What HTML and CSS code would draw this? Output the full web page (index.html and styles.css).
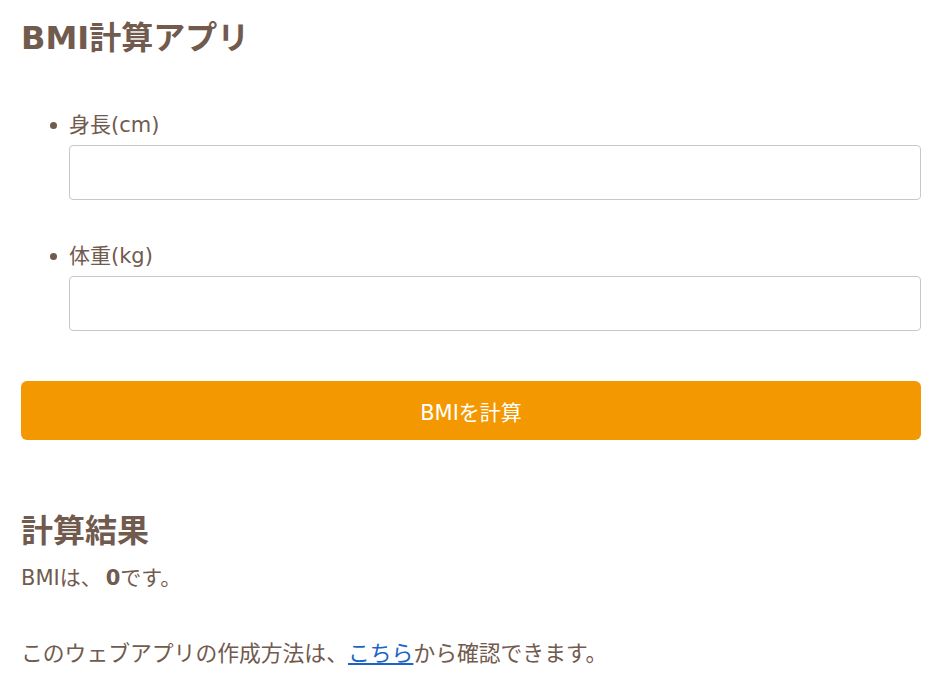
FILE: index.html
```html
<!DOCTYPE html>
<html lang="ja">
<head>
<meta charset="utf-8">
<title>BMI計算アプリ</title>
<link rel="stylesheet" href="styles.css">
</head>
<body>
<main class="app">
  <h1 class="title">BMI計算アプリ</h1>
  <ul class="fields">
    <li class="field">
      <label class="label">身長(cm)</label>
      <input class="input" type="text">
    </li>
    <li class="field">
      <label class="label">体重(kg)</label>
      <input class="input" type="text">
    </li>
  </ul>
  <button class="btn">BMIを計算</button>
  <h2 class="subtitle">計算結果</h2>
  <p class="result">BMIは、<strong class="value">0</strong>です。</p>
  <p class="note">このウェブアプリの作成方法は、<a href="#" class="link">こちら</a>から確認できます。</p>
</main>
</body>
</html>
```

FILE: styles.css
```css
* { box-sizing: border-box; }
html, body { margin: 0; padding: 0; background: #fff; }
body {
  font-family: "DejaVu Sans", "Noto Sans CJK JP", sans-serif;
  color: #715a4e;
}
.app {
  width: 900px;
  margin-left: 21px;
  padding-top: 14px;
}
.title {
  margin: 0;
  font-size: 32px;
  line-height: 48px;
  font-weight: 700;
}
.fields {
  margin: 49px 0 0;
  padding: 0 0 0 48px;
  list-style: none;
}
.field {
  position: relative;
  margin-bottom: 42px;
}
.field:last-child {
  margin-bottom: 50px;
}
.field::before {
  content: "";
  position: absolute;
  left: -19px;
  top: 11px;
  width: 7px;
  height: 7px;
  border-radius: 50%;
  background: #715a4e;
}
.label {
  display: block;
  font-size: 21px;
  line-height: 28px;
  margin-bottom: 6px;
}
.input {
  display: block;
  width: 852px;
  height: 55px;
  border: 1px solid #c8c8c8;
  border-radius: 4px;
  background: #fff;
}
.btn {
  display: block;
  width: 900px;
  height: 59px;
  border: none;
  border-radius: 6px;
  background: #f39800;
  color: #fff;
  font-family: inherit;
  font-size: 21px;
  margin-top: 0;
}
.subtitle {
  margin: 71px 0 0;
  font-size: 32px;
  line-height: 40px;
  font-weight: 700;
}
.result {
  margin: 13px 0 0;
  font-size: 21px;
  line-height: 28px;
}
.value {
  font-weight: 700;
  margin-left: 4px;
}
.note {
  margin: 48px 0 0;
  font-size: 21.8px;
  line-height: 28px;
}
.link {
  color: #1a64c8;
  text-decoration: underline;
}
```
